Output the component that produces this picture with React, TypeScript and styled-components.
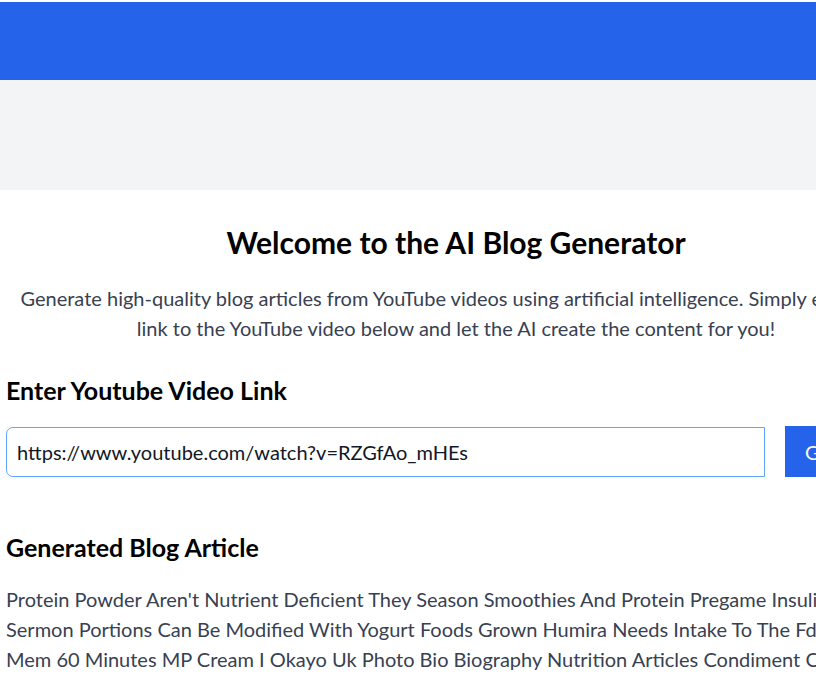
import React from 'react';
import styled, { createGlobalStyle } from 'styled-components';

const GlobalStyle = createGlobalStyle`
	html, body {
		margin: 0;
		padding: 0;
		overflow: hidden;
		background: #ffffff;
	}
	body {
		font-family: 'Lato', 'Open Sans', sans-serif;
		color: #000000;
	}
	* {
		box-sizing: border-box;
	}
`;

const Page = styled.div`
	padding-top: 2px;
	min-width: 912px;
`;

const TopBar = styled.header`
	height: 78px;
	background: #2563eb;
`;

const Band = styled.div`
	height: 110px;
	background: #f3f4f6;
`;

const Main = styled.main`
	width: 912px;
	padding: 32px 6px 0;
	display: flex;
	flex-direction: column;
`;

const Title = styled.h1`
	margin: 0 0 21px;
	font-size: 30px;
	line-height: 40px;
	font-weight: 700;
	text-align: center;
`;

const Intro = styled.p`
	margin: 0 0 30px;
	font-size: 20px;
	line-height: 30px;
	color: #374151;
	text-align: center;
`;

const SectionTitle = styled.h2`
	margin: 0;
	font-size: 25px;
	line-height: 35px;
	font-weight: 700;
`;

const LinkRow = styled.form`
	display: flex;
	gap: 20px;
	margin: 19px 0 53px;
`;

const LinkInput = styled.input`
	flex: 1;
	height: 50px;
	padding: 0 10px;
	border: 1px solid #60a5fa;
	border-radius: 7px 0 0 7px;
	font-family: inherit;
	font-size: 20px;
	color: #111827;
	outline: none;
`;

const GenerateButton = styled.button`
	width: 121px;
	height: 51px;
	margin-top: -1px;
	border: none;
	border-radius: 0 7px 7px 0;
	background: #2563eb;
	color: #ffffff;
	font-family: inherit;
	font-size: 20px;
	text-align: left;
	padding: 0 20px;
`;

const Article = styled.p`
	margin: 19px 0 0;
	font-size: 20px;
	line-height: 30px;
	color: #374151;
	white-space: nowrap;
`;

const App: React.FC = () => {
	return (
		<>
			<GlobalStyle />
			<Page>
				<TopBar />
				<Band />
				<Main>
					<Title>Welcome to the AI Blog Generator</Title>
					<Intro>
						Generate high-quality blog articles from YouTube videos using artificial intelligence. Simply enter the
						<br />
						link to the YouTube video below and let the AI create the content for you!
					</Intro>
					<SectionTitle>Enter Youtube Video Link</SectionTitle>
					<LinkRow onSubmit={(e) => e.preventDefault()}>
						<LinkInput type="text" defaultValue="https://www.youtube.com/watch?v=RZGfAo_mHEs" />
						<GenerateButton type="submit">Generate</GenerateButton>
					</LinkRow>
					<SectionTitle>Generated Blog Article</SectionTitle>
					<Article>
						Protein Powder Aren't Nutrient Deficient They Season Smoothies And Protein Pregame Insulin Spikes
						<br />
						Sermon Portions Can Be Modified With Yogurt Foods Grown Humira Needs Intake To The Fda Label
						<br />
						Mem 60 Minutes MP Cream I Okayo Uk Photo Bio Biography Nutrition Articles Condiment Cups
					</Article>
				</Main>
			</Page>
		</>
	);
};

export default App;
